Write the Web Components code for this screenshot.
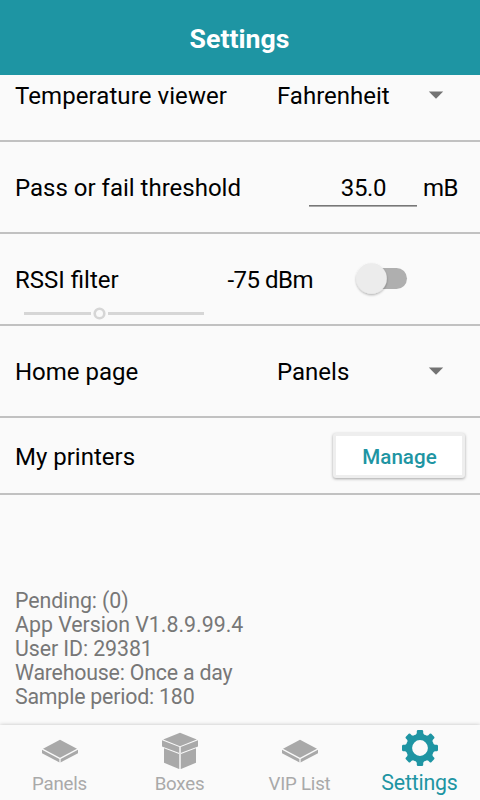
<!DOCTYPE html>
<html lang="en">
<head>
<meta charset="utf-8">
<title>Settings</title>
<style>
html,body{margin:0;height:100%}
body{font-family:Roboto,"Liberation Sans",sans-serif;background:#fafafa;color:#000;overflow:hidden}
</style>
</head>
<body>
<settings-app></settings-app>
<script>
const define = (name, html) => customElements.define(name, class extends HTMLElement {
  constructor() {
    super();
    const t = document.createElement('template');
    t.innerHTML = html;
    this.attachShadow({mode: 'open'}).append(t.content.cloneNode(true));
  }
});

define('app-header', `<style>
:host{display:flex;flex:none;height:75px;align-items:center;justify-content:center;background:#1e95a3;color:#fff;font-size:26.67px;font-weight:700;line-height:32px;padding:3px 1px 0 0;box-sizing:border-box}
</style><span><slot></slot></span>`);

define('setting-row', `<style>
:host{display:flex;box-sizing:border-box;height:92px;border-bottom:2px solid #c1c1c1;padding:2px 15px 0;align-items:center;font-size:24px;line-height:28px;white-space:nowrap;flex:none}
:host([short]){height:77px}
.label{flex:1}
.ctl{display:flex;align-items:center;flex:none}
</style><span class="label"><slot name="label"></slot></span><div class="ctl"><slot></slot></div>`);

define('drop-down', `<style>
:host{display:flex;width:188px;align-items:center;font-size:24px}
span{flex:1}
svg{display:block;margin:-2px 21px 0 0}
</style><span><slot></slot></span><svg width="16" height="8"><path d="M.8 .5H15.2L8 7.7Z" fill="#737373"/></svg>`);

define('number-field', `<style>
:host{display:flex;align-items:center;gap:6px;padding-right:7px}
.v{width:108px;height:37px;padding:4px 0 0 1px;margin-top:1px;box-sizing:border-box;text-align:center;letter-spacing:-.3px;background:linear-gradient(#777 50%,#aaa 50%) bottom/100% 2px no-repeat}
.u{letter-spacing:-.5px}
</style><span class="v"><slot></slot></span><span class="u"><slot name="unit"></slot></span>`);

define('toggle-switch', `<style>
:host{display:flex;align-items:center;width:50px;height:32px;margin:-2px 58px 0 44px}
svg{display:block;overflow:visible}
</style><svg width="50" height="32"><defs><filter id="s" x="-30%" y="-30%" width="160%" height="160%"><feDropShadow dx="0" dy="1.3" stdDeviation="0.9" flood-opacity=".3"/></filter></defs>
<rect x="4" y="5" width="46" height="21" rx="10.5" fill="#afafaf"/><circle cx="14.5" cy="15.5" r="15.3" fill="#ececec" filter="url(#s)"/></svg>`);

define('range-slider', `<style>
:host{display:block;width:180px;height:14px;margin:-20px 0 6px 24px;position:relative;z-index:1;flex:none}
svg{display:block}
</style><svg width="180" height="14"><path d="M0 7.5H67M84 7.5H180" stroke="#d6d6d6" stroke-width="3"/><circle cx="75.5" cy="7.5" r="4.8" fill="none" stroke="#d6d6d6" stroke-width="2.6"/></svg>`);

define('raised-button', `<style>
:host{display:flex;box-sizing:border-box;width:132px;height:45px;margin:-3px 0 0 0;border:3px solid #eee;border-radius:3px;background:#fff;align-items:center;justify-content:center;color:#1e95a3;font-size:20.6px;font-weight:500;line-height:24px;padding:3px 0 0 1px;box-shadow:0 1px 3px rgba(0,0,0,.35)}
</style><slot></slot>`);

define('info-list', `<style>
:host{display:block;margin:94px 15px 0;font-size:21.33px;line-height:24px;color:#777}
</style><slot></slot>`);

const icons = {
  panel: '<path d="M18 9.8L35 18.8L18 27.8L1 18.8Z"/><path d="M0 19.8L17.4 29V32.4L15.7 31.6L0 23.3Z"/><path d="M36 19.8L18.6 29V32.4L20.3 31.6L36 23.3Z"/>',
  box: '<path d="M18 2.8L34.8 9.5L18 16.2L1.2 9.5Z"/><path d="M0 10.2L17.4 17.1V23L0 16.6Z"/><path d="M36 10.2L18.6 17.1V23L36 16.6Z"/><path d="M2 18.3L17 23.9V39L2 32.8Z"/><path d="M34 18.3L19 23.9V39L34 32.8Z"/><path d="M17 17V39H19V17Z" fill="#e4e4e4"/>'
};
customElements.define('tab-icon', class extends HTMLElement {
  connectedCallback() {
    const kind = this.getAttribute('kind');
    let art = icons[kind];
    if (kind === 'gear') {
      const tooth = '<path d="M-5 -11L-3.2 -15V-17Q-3 -18 -2 -18H2Q3 -18 3.2 -17V-15L5 -11Z" transform="rotate(A)"/>';
      art = '<g transform="translate(18 18)"><circle r="11" fill="none" stroke="currentColor" stroke-width="6.2"/>'
        + [0,45,90,135,180,225,270,315].map(a => tooth.replace('A', a)).join('') + '</g>';
    }
    this.attachShadow({mode: 'open'}).innerHTML =
      `<style>:host{display:block;width:36px;height:40px}svg{display:block;overflow:visible}</style><svg width="36" height="40" fill="currentColor">${art}</svg>`;
  }
});

define('tab-item', `<style>
:host{display:flex;flex:1 1 0;flex-direction:column;align-items:center;color:#a9a9a9;padding-top:5px;font-size:18.67px;line-height:22px;letter-spacing:-.2px}
span{margin:3px 1px 0 0}
:host([active]){color:#1e95a3;font-size:21.33px}
:host([active]) span{margin-top:2px}
</style><slot name="icon"></slot><span><slot></slot></span>`);

define('tab-bar', `<style>
:host{display:flex;flex:none;box-sizing:border-box;height:75px;background:#fafafa;box-shadow:0 0 4px rgba(0,0,0,.23);position:relative}
</style><slot></slot>`);

define('settings-app', `<style>
:host{display:flex;flex-direction:column;width:480px;height:800px}
main{flex:1;min-height:0;overflow:hidden;display:flex;flex-direction:column}
.first{margin-top:-25px}
.wide{letter-spacing:.08px}
.tight{letter-spacing:-.5px}
info-list div{white-space:nowrap;letter-spacing:-.08px}
info-list .last{letter-spacing:-.2px}
</style>
<app-header>Settings</app-header>
<main>
<setting-row class="first"><span slot="label" class="wide">Temperature viewer</span><drop-down>Fahrenheit</drop-down></setting-row>
<setting-row><span slot="label">Pass or fail threshold</span><number-field>35.0<span slot="unit">mB</span></number-field></setting-row>
<setting-row><span slot="label">RSSI filter</span><span class="tight">-75 dBm</span><toggle-switch></toggle-switch></setting-row>
<range-slider></range-slider>
<setting-row><span slot="label">Home page</span><drop-down>Panels</drop-down></setting-row>
<setting-row short><span slot="label">My printers</span><raised-button>Manage</raised-button></setting-row>
<info-list><div>Pending: (0)</div><div style="letter-spacing:0">App Version V1.8.9.99.4</div><div>User ID: 29381</div><div class="last">Warehouse: Once a day</div><div class="last">Sample period: 180</div></info-list>
</main>
<tab-bar>
<tab-item><tab-icon slot="icon" kind="panel"></tab-icon>Panels</tab-item>
<tab-item><tab-icon slot="icon" kind="box"></tab-icon>Boxes</tab-item>
<tab-item><tab-icon slot="icon" kind="panel"></tab-icon>VIP List</tab-item>
<tab-item active><tab-icon slot="icon" kind="gear"></tab-icon>Settings</tab-item>
</tab-bar>`);
</script>
</body>
</html>
